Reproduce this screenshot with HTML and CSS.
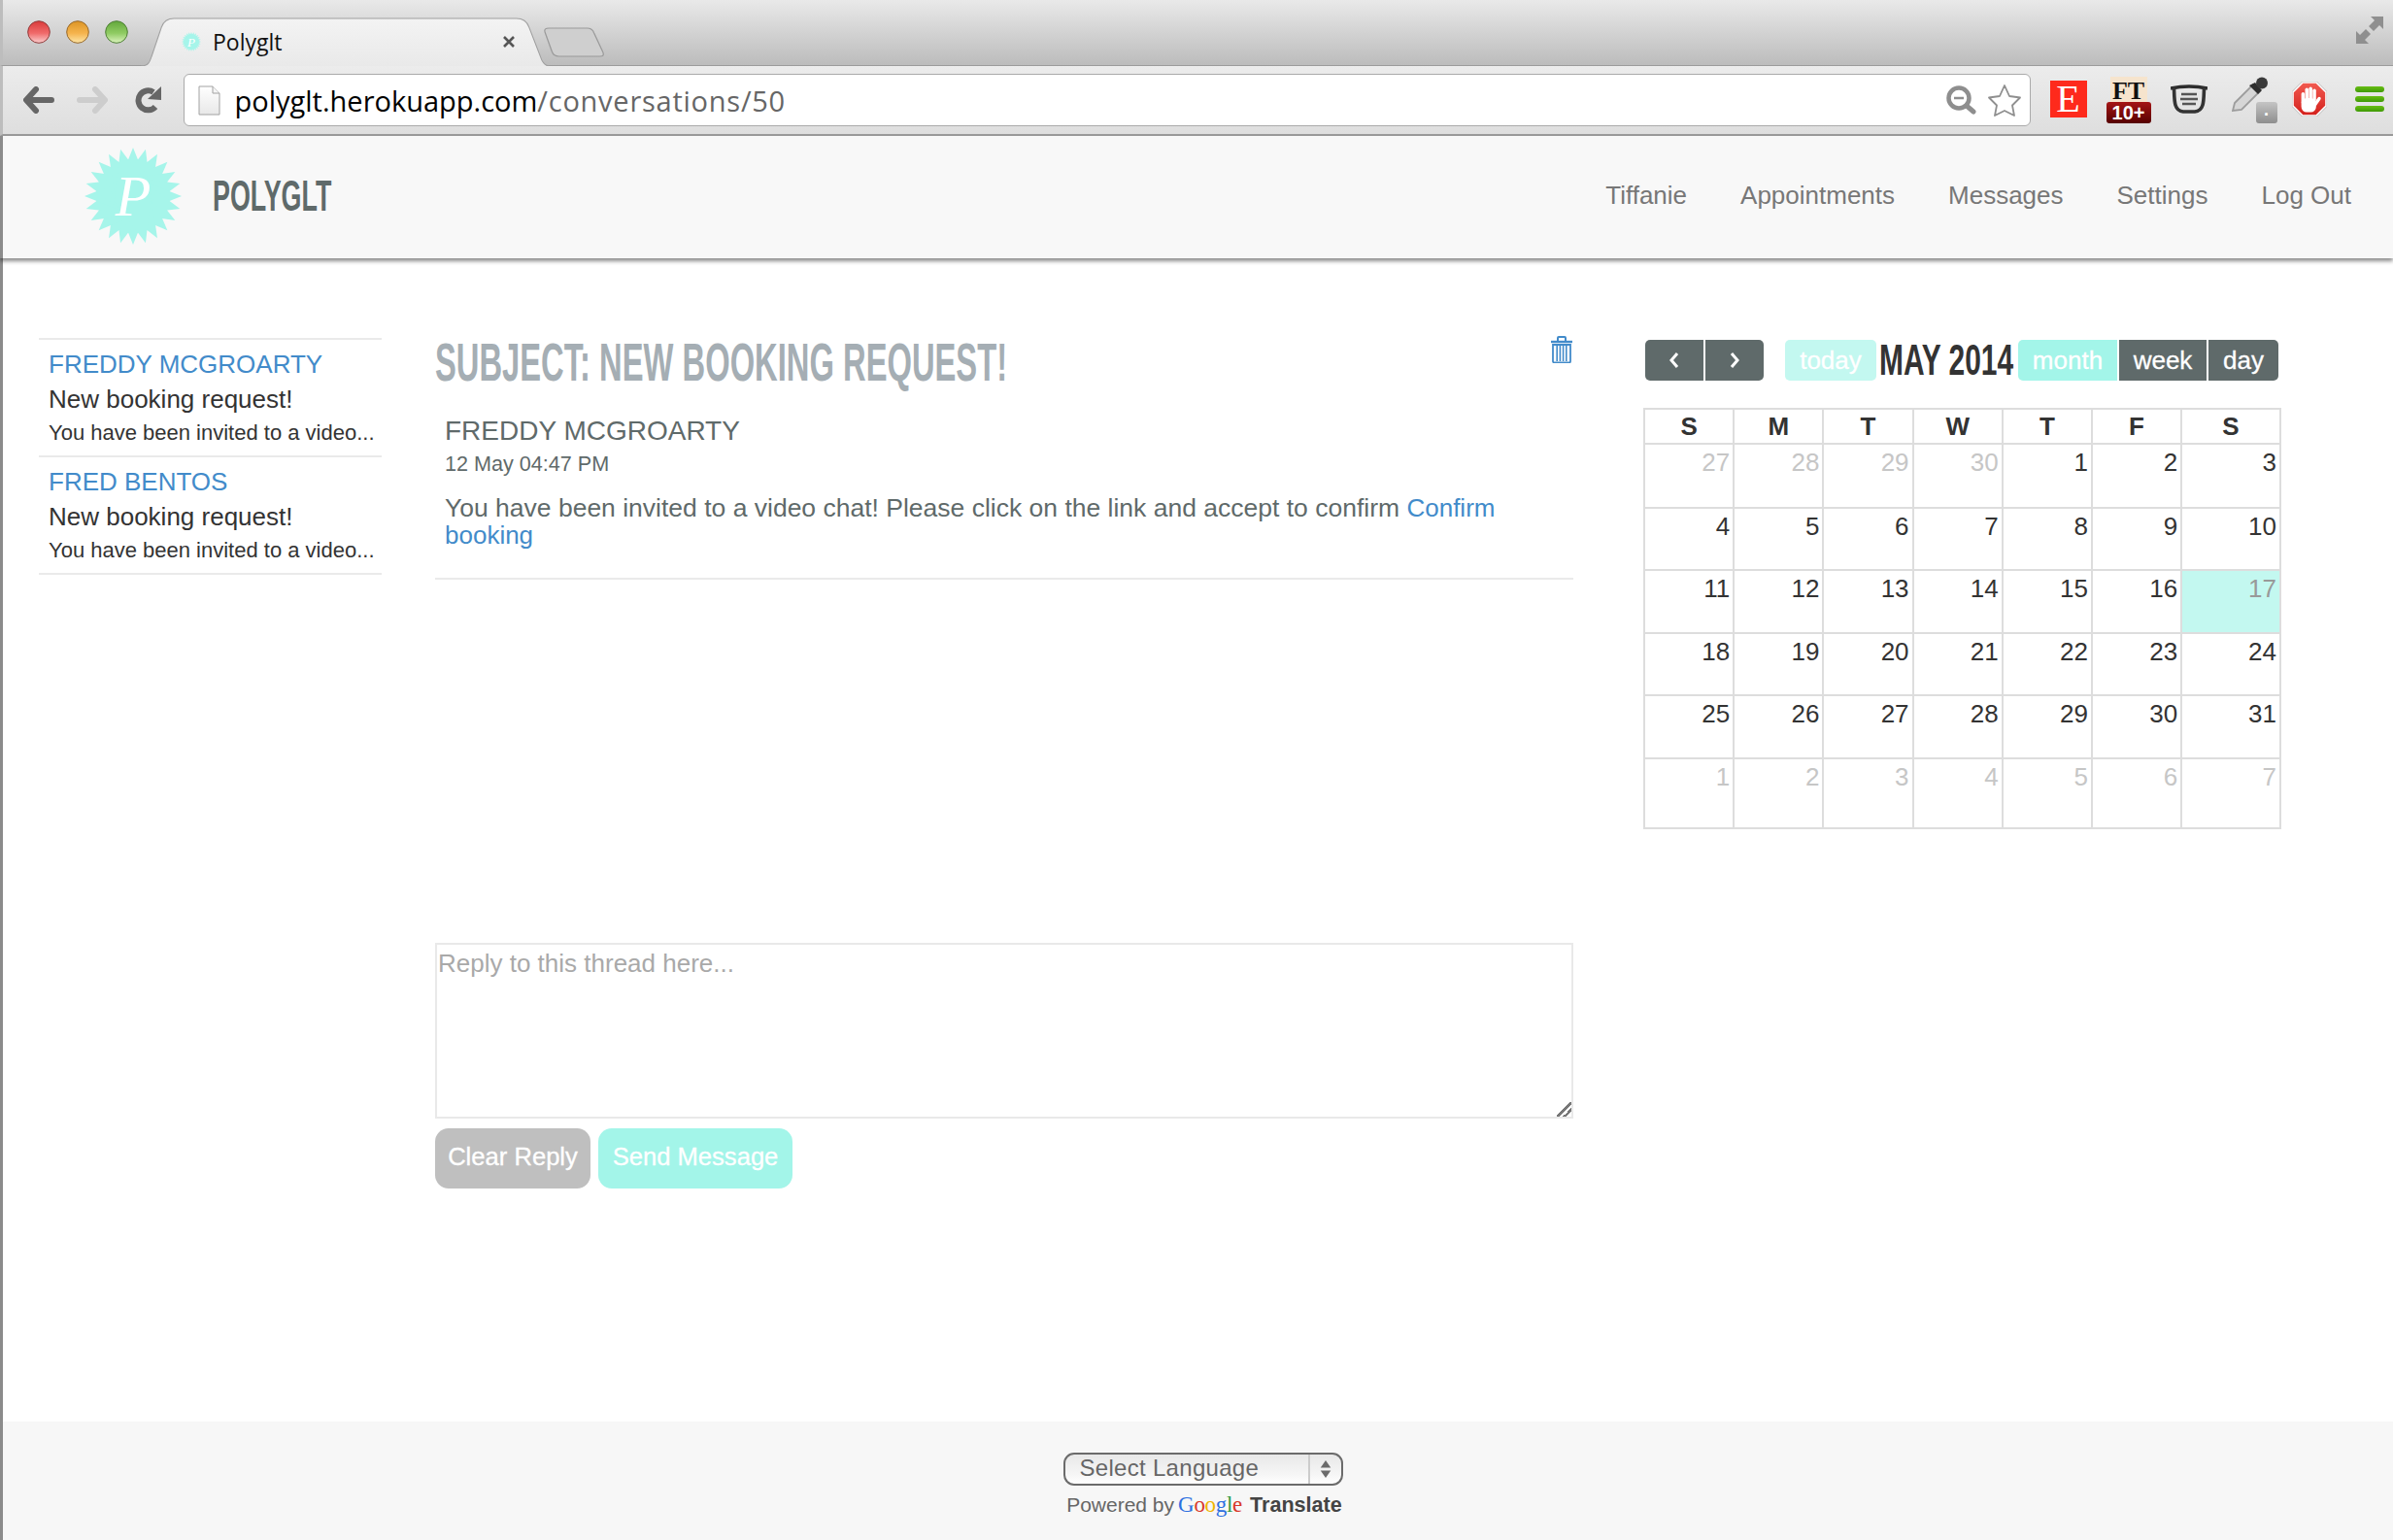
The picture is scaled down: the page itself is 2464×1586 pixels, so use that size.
FILE: index.html
```html
<!DOCTYPE html>
<html lang="en">
<head>
<meta charset="utf-8">
<title>Polyglt</title>
<link rel="stylesheet" href="styles.css">
</head>
<body>
<svg class="defs" width="0" height="0">
  <defs>
    <symbol id="burst" viewBox="-50 -50 100 100">
      <circle r="38"/>
      <g id="ray-set">
        <polygon id="ray" points="0,-50 20,0 0,50 -20,0"/>
        <use href="#ray" transform="rotate(15)"/>
        <use href="#ray" transform="rotate(30)"/>
        <use href="#ray" transform="rotate(45)"/>
      </g>
      <use href="#ray-set" transform="rotate(60)"/>
      <use href="#ray-set" transform="rotate(120)"/>
    </symbol>
    <linearGradient id="tabfill" x1="0" y1="0" x2="0" y2="1">
      <stop offset="0" stop-color="#f3f3f3"/><stop offset="1" stop-color="#e9e9e9"/>
    </linearGradient>
    <linearGradient id="redlight" x1="0" y1="0" x2="0" y2="1">
      <stop offset="0" stop-color="#d93a3a"/><stop offset=".55" stop-color="#f06a6a"/><stop offset="1" stop-color="#fbd0d0"/>
    </linearGradient>
    <linearGradient id="amberlight" x1="0" y1="0" x2="0" y2="1">
      <stop offset="0" stop-color="#dc9526"/><stop offset=".55" stop-color="#f5b34c"/><stop offset="1" stop-color="#fde6a8"/>
    </linearGradient>
    <linearGradient id="greenlight" x1="0" y1="0" x2="0" y2="1">
      <stop offset="0" stop-color="#63a83c"/><stop offset=".55" stop-color="#8fcb62"/><stop offset="1" stop-color="#dcf3bf"/>
    </linearGradient>
    <linearGradient id="docfill" x1="0" y1="0" x2="0" y2="1">
      <stop offset="0" stop-color="#ffffff"/><stop offset="1" stop-color="#e8e8e8"/>
    </linearGradient>
    <linearGradient id="adblock" x1="0" y1="0" x2="0" y2="1">
      <stop offset="0" stop-color="#f25a50"/><stop offset="1" stop-color="#d3201c"/>
    </linearGradient>
  </defs>
</svg>

<div class="browser">
  <div class="titlebar">
    <div class="lights">
      <svg class="light" viewBox="0 0 24 24"><circle cx="12" cy="12" r="11.3" fill="url(#redlight)" stroke="#8f3a3a"/></svg>
      <svg class="light" viewBox="0 0 24 24"><circle cx="12" cy="12" r="11.3" fill="url(#amberlight)" stroke="#97682a"/></svg>
      <svg class="light" viewBox="0 0 24 24"><circle cx="12" cy="12" r="11.3" fill="url(#greenlight)" stroke="#4d7f35"/></svg>
    </div>
    <div class="tab">
      <svg class="tab-shape" viewBox="0 0 416 51" preserveAspectRatio="none"><path d="M0 50 C8 50 9 46 11 40 L21 10 C23 4 27 1 34 1 H382 C389 1 393 4 395 10 L408 44 C410 48 412 50 416 50 V51 H0 Z" fill="url(#tabfill)" stroke="#a0a0a0"/></svg>
      <span class="tab-burst">
        <svg class="fav" viewBox="0 0 20 20"><use href="#burst" width="20" height="20" fill="#a6f5ea"/><text x="10" y="14.5" class="fav-p">P</text></svg>
      </span>
      <span class="tab-title">Polyglt</span>
      <svg class="tab-close" viewBox="0 0 14 14"><path d="M2 2 L12 12 M12 2 L2 12" stroke="#555" stroke-width="2.6" fill="none"/></svg>
    </div>
    <svg class="newtab" viewBox="0 0 62 31" preserveAspectRatio="none"><path d="M2 5 C1 2 3 1 6 1 H44 C48 1 50 3 51 6 L60 26 C61 29 60 30 57 30 H16 C12 30 10 28 9 25 Z" fill="#cfcfcf" stroke="#9a9a9a" stroke-width="1.2"/></svg>
    <svg class="expand" viewBox="0 0 28 28"><path d="M15 0 H28 V13 L24 9 L18 15 L13 10 L19 4 Z M0 28 V15 L4 19 L10 13 L15 18 L9 24 L13 28 Z" fill="#8f8f8f"/></svg>
  </div>

  <div class="toolbar">
    <svg class="nav-ico" viewBox="0 0 32 28"><path d="M13 3 L3 14 L13 25 M5 14 H29" fill="none" stroke="#666" stroke-width="6" stroke-linecap="round" stroke-linejoin="round"/></svg>
    <svg class="nav-ico fwd" viewBox="0 0 32 28"><path d="M19 3 L29 14 L19 25 M27 14 H3" fill="none" stroke="#cdcdcd" stroke-width="6" stroke-linecap="round" stroke-linejoin="round"/></svg>
    <svg class="reload" viewBox="0 0 28 28"><path d="M21 21 A10 10 0 1 1 19 6" fill="none" stroke="#666" stroke-width="6"/><polygon points="27,0 27,14 13,13" fill="#666"/></svg>
    <div class="omnibox">
      <svg class="doc" viewBox="0 0 23 31"><path d="M1 1 H15 L22 8 V30 H1 Z" fill="url(#docfill)" stroke="#a2a2a2"/><path d="M15 1 V8 H22" fill="#f5f5f5" stroke="#a2a2a2"/></svg>
      <span class="url"><span class="url-host">polyglt.herokuapp.com</span>/conversations/50</span>
      <svg class="magnifier" viewBox="0 0 31 30"><circle cx="13" cy="13" r="10.5" fill="none" stroke="#8e8e8e" stroke-width="4.5"/><path d="M8 13 H18" stroke="#8e8e8e" stroke-width="2.5"/><path d="M21 21 L28 27" stroke="#8e8e8e" stroke-width="5" stroke-linecap="round"/></svg>
      <svg class="star" viewBox="0 0 36 35"><path d="M18 2 L23 13 L34 14.5 L26 22.5 L28 33 L18 28 L8 33 L10 22.5 L2 14.5 L13 13 Z" fill="#fff" stroke="#8f8f8f" stroke-width="1.8" stroke-linejoin="round"/></svg>
    </div>
    <div class="ext-e">E</div>
    <div class="ext-ft"><span class="ft-word">FT</span><span class="ft-badge">10+</span></div>
    <svg class="ext-glasses" viewBox="0 0 38 30"><path d="M0 4 Q19 0 38 4" fill="none" stroke="#2c2c2c" stroke-width="3.6"/><path d="M3.5 3 C4 16 3 27 13 28 H25 C35 27 34 16 34.5 3" fill="none" stroke="#333" stroke-width="3.6"/><path d="M11 10 H27 M10 15 H28 M12 20 H26" stroke="#555" stroke-width="2.4"/></svg>
    <div class="ext-dropper">
      <svg class="dropper-ico" viewBox="0 0 38 37"><path d="M1 35 L3 27 L22 8 L29 15 L10 34 Z" fill="#d6d6d6" stroke="#9c9c9c" stroke-width="1.8"/><path d="M18 9 L27 18 L31 14 L24 6 Z" fill="#2e2e2e"/><circle cx="31" cy="6.5" r="6" fill="#3a3a3a"/></svg>
      <span class="dropper-badge">.</span>
    </div>
    <svg class="ext-stop" viewBox="0 0 36 36">
      <polygon points="11,1 25,1 35,11 35,25 25,35 11,35 1,25 1,11" fill="url(#adblock)" stroke="#fff" stroke-width="1.6"/>
      <polygon points="10.5,0 25.5,0 36,10.5 36,25.5 25.5,36 10.5,36 0,25.5 0,10.5" fill="none" stroke="#b5b5b5" stroke-width=".8"/>
      <g fill="#fff">
        <rect x="9.6" y="11" width="3.5" height="12" rx="1.75"/>
        <rect x="13.5" y="6.5" width="3.5" height="14" rx="1.75"/>
        <rect x="17.4" y="5.5" width="3.5" height="15" rx="1.75"/>
        <rect x="21.3" y="7.5" width="3.5" height="13" rx="1.75"/>
        <rect x="9.6" y="17" width="15.2" height="14.5" rx="5.5"/>
      </g>
      <path d="M23.5 24 L28 17.5" stroke="#fff" stroke-width="3.4" stroke-linecap="round"/>
    </svg>
    <div class="ext-menu"><span class="menu-bar"></span><span class="menu-bar"></span><span class="menu-bar"></span></div>
  </div>

  <header class="site-header">
    <a class="brand">
      <span class="brand-mark">
        <svg class="burst-svg" viewBox="0 0 100 100"><use href="#burst" width="100" height="100" fill="#a6f5ea"/><text x="50" y="70" class="logo-p">P</text></svg>
      </span>
      <span class="brand-box"><span class="brand-name">POLYGLT</span></span>
    </a>
    <nav class="site-nav">
      <a>Tiffanie</a><a>Appointments</a><a>Messages</a><a>Settings</a><a>Log Out</a>
    </nav>
  </header>

  <main class="content">
    <aside class="threads">
      <div class="thread">
        <a class="thread-name">FREDDY MCGROARTY</a>
        <div class="thread-subject">New booking request!</div>
        <div class="thread-text">You have been invited to a video...</div>
      </div>
      <div class="thread">
        <a class="thread-name">FRED BENTOS</a>
        <div class="thread-subject">New booking request!</div>
        <div class="thread-text">You have been invited to a video...</div>
      </div>
    </aside>

    <section class="conversation">
      <div class="subject-row">
        <h1 class="subject-box"><span class="subject">SUBJECT: NEW BOOKING REQUEST!</span></h1>
        <svg class="trash" viewBox="0 0 24 28"><path d="M1 6 H23" stroke="#428bca" stroke-width="2.4"/><path d="M8 5 V2 a1 1 0 0 1 1 -1 H15 a1 1 0 0 1 1 1 V5" fill="none" stroke="#428bca" stroke-width="2"/><path d="M3 9 H21 V26 a1.5 1.5 0 0 1 -1.5 1.5 H4.5 A1.5 1.5 0 0 1 3 26 Z" fill="none" stroke="#428bca" stroke-width="1.8"/><path d="M7.2 10 V26 M10.4 10 V26 M13.6 10 V26 M16.8 10 V26" stroke="#428bca" stroke-width="1.6"/></svg>
      </div>
      <article class="message">
        <div class="message-from">FREDDY MCGROARTY</div>
        <div class="message-date">12 May 04:47 PM</div>
        <p class="message-body">You have been invited to a video chat! Please click on the link and accept to confirm <a>Confirm booking</a></p>
      </article>
      <textarea class="reply" placeholder="Reply to this thread here..."></textarea>
      <div class="reply-actions">
        <button class="btn btn-clear">Clear Reply</button>
        <button class="btn btn-send">Send Message</button>
      </div>
    </section>

    <section class="calendar">
      <div class="cal-toolbar">
        <div class="cal-group">
          <button class="cal-btn cal-prev"><svg class="chev" viewBox="0 0 12 20"><path d="M9 3 L3 10 L9 17" fill="none" stroke="#fff" stroke-width="3"/></svg></button>
          <button class="cal-btn cal-next"><svg class="chev" viewBox="0 0 12 20"><path d="M3 3 L9 10 L3 17" fill="none" stroke="#fff" stroke-width="3"/></svg></button>
        </div>
        <button class="cal-btn cal-today">today</button>
        <h2 class="cal-title-box"><span class="cal-title">MAY 2014</span></h2>
        <div class="cal-group">
          <button class="cal-btn cal-month">month</button>
          <button class="cal-btn cal-week">week</button>
          <button class="cal-btn cal-day">day</button>
        </div>
      </div>
      <table class="cal-table">
        <colgroup><col class="c"><col class="c"><col class="c"><col class="c"><col class="c"><col class="c"><col class="c-last"></colgroup>
        <thead><tr class="r-head"><th>S</th><th>M</th><th>T</th><th>W</th><th>T</th><th>F</th><th>S</th></tr></thead>
        <tbody>
          <tr class="r-first"><td class="off">27</td><td class="off">28</td><td class="off">29</td><td class="off">30</td><td>1</td><td>2</td><td>3</td></tr>
          <tr class="r"><td>4</td><td>5</td><td>6</td><td>7</td><td>8</td><td>9</td><td>10</td></tr>
          <tr class="r"><td>11</td><td>12</td><td>13</td><td>14</td><td>15</td><td>16</td><td class="now">17</td></tr>
          <tr class="r"><td>18</td><td>19</td><td>20</td><td>21</td><td>22</td><td>23</td><td>24</td></tr>
          <tr class="r"><td>25</td><td>26</td><td>27</td><td>28</td><td>29</td><td>30</td><td>31</td></tr>
          <tr class="r-last"><td class="off">1</td><td class="off">2</td><td class="off">3</td><td class="off">4</td><td class="off">5</td><td class="off">6</td><td class="off">7</td></tr>
        </tbody>
      </table>
    </section>
  </main>

  <footer class="site-footer">
    <div class="lang-select">
      <span class="lang-label">Select Language</span>
      <span class="lang-arrows"><svg class="lang-svg" viewBox="0 0 16 26"><path d="M8 1 L15 11 H1 Z M1 15 H15 L8 25 Z" fill="#6b6b6b"/></svg></span>
    </div>
    <div class="powered">
      <span>Powered by</span>
      <span class="google"><span class="g-b">G</span><span class="g-r">o</span><span class="g-y">o</span><span class="g-b">g</span><span class="g-g">l</span><span class="g-r">e</span></span>
      <strong class="translate">Translate</strong>
    </div>
  </footer>
</div>
</body>
</html>
```
FILE: styles.css
```css
* { box-sizing: border-box; }
html, body { margin: 0; padding: 0; background: #fff; }
body { font-family: "Liberation Sans", Arial, sans-serif; }
.defs { position: absolute; }
a { color: inherit; text-decoration: none; }

.browser { min-height: 100vh; display: flex; flex-direction: column; }

/* Title bar */
.titlebar {
  height: 68px; display: flex; align-items: flex-start;
  background: linear-gradient(#e9e9e9, #bcbcbc);
  border-bottom: 1px solid #9b9b9b;
  border-left: 3px solid #bdbdbd;
}
.lights { display: flex; gap: 16px; margin: 21px 0 0 25px; }
.light { width: 24px; height: 24px; display: block; }
.tab {
  position: relative; width: 421px; height: 50px; margin: 18px 0 0 13px;
  display: flex; align-items: center; padding: 0 35px 0 42px;
}
.tab-shape { position: absolute; inset: 0; width: 421px; height: 51px; }
.tab-burst, .tab-title, .tab-close { position: relative; }
.tab-burst { width: 20px; height: 20px; display: block; }
.fav { width: 20px; height: 20px; display: block; }
.fav-p { font: italic 13px "Liberation Serif", serif; fill: #fff; text-anchor: middle; }
.tab-title { margin-left: 12px; font: 23px "Open Sans", sans-serif; color: #111; flex: 1; }
.tab-close { width: 14px; height: 14px; }
.newtab { width: 64px; height: 31px; margin: 28px 0 0 -7px; }
.expand { width: 28px; height: 28px; margin: 17px 10px 0 auto; }

/* Toolbar */
.toolbar {
  height: 72px; display: flex; align-items: center;
  background: linear-gradient(#ececec, #dedede);
  border-bottom: 2px solid #9b9b9b;
  border-left: 3px solid #bdbdbd;
  position: relative;
}
.nav-ico { width: 32px; height: 28px; margin-left: 21px; }
.nav-ico.fwd { margin-left: 23px; }
.reload { width: 28px; height: 28px; margin-left: 28px; }
.omnibox {
  width: 1902px; height: 54px; margin-left: 21.5px;
  display: flex; align-items: center;
  background: #fff; border: 1.5px solid #aaa; border-radius: 6px;
}
.doc { width: 23px; height: 31px; margin-left: 14px; }
.url { margin-left: 15px; font: 29px "Open Sans", sans-serif; color: #666; flex: 1; white-space: nowrap; letter-spacing: .75px; }
.url-host { color: #000; letter-spacing: 0; }
.magnifier { width: 31px; height: 30px; margin-right: 11px; }
.star { width: 36px; height: 35px; margin-right: 8px; }
.ext-e {
  width: 38px; height: 38px; margin: -2px 0 0 20px;
  background: #fe2a1c; color: #fff; text-align: center;
  font: 40px/38px "Liberation Serif", serif;
}
.ext-ft { position: relative; width: 46px; height: 48px; margin: 0 0 0 20px; }
.ft-word {
  position: absolute; left: 4px; top: 0; width: 38px; height: 28px;
  background: #f6e4cd; color: #111; text-align: center;
  font: bold 26px/30px "Liberation Serif", serif;
}
.ft-badge {
  position: absolute; left: 0; top: 26px; width: 46px; height: 22px;
  background: linear-gradient(#a51616, #560000); color: #fff; border-radius: 3px;
  text-align: center; font: bold 20px/22px "Liberation Sans", sans-serif;
}
.ext-glasses { width: 38px; height: 30px; margin: -2px 0 0 20px; }
.ext-dropper { position: relative; width: 47px; height: 48px; margin-left: 25px; }
.dropper-ico { width: 38px; height: 37px; display: block; }
.dropper-badge {
  position: absolute; left: 25px; top: 26px; width: 22px; height: 22px;
  background: linear-gradient(#c4c4c4, #8e8e8e); color: #fff; border-radius: 3px;
  text-align: center; font: bold 18px/16px "Liberation Sans", sans-serif;
}
.ext-stop { width: 36px; height: 36px; margin: -2px 0 0 15px; }
.ext-menu { width: 30px; margin-left: 29px; display: flex; flex-direction: column; gap: 4px; margin-top: -2px; }
.menu-bar { height: 6px; border-radius: 3px; background: linear-gradient(#68be14, #3f9a06); display: block; }

/* Header */
.site-header {
  height: 126px; display: flex; align-items: center; justify-content: space-between;
  background: #f8f8f8; padding: 0 43px 3px 84px;
  border-left: 3px solid #8b8b8b;
  box-shadow: 0 3px 4px rgba(0, 0, 0, .45);
  position: relative;
}
.brand { display: flex; align-items: center; }
.brand-mark { width: 100px; height: 100px; display: block; }
.burst-svg { width: 100px; height: 100px; display: block; }
.logo-p { font: italic 60px "Liberation Serif", serif; fill: #fff; text-anchor: middle; }
.brand-box { display: block; width: 122px; margin-left: 32px; height: 46px; }
.brand-name {
  display: inline-block; transform: scaleX(.61); transform-origin: left center;
  font-size: 44px; line-height: 46px; font-weight: bold; color: #5f6a6a; white-space: nowrap;
}
.site-nav { display: flex; gap: 55px; font-size: 26px; color: #777; }

/* Main */
.content {
  flex: 1; display: grid; grid-template-columns: 354px 1172px 656px;
  column-gap: 55px; padding: 82px 0 0 36px; align-items: start;
  border-left: 3px solid #8b8b8b;
}
.threads { border-bottom: 2px solid #eaeaea; margin-left: 1px; }
.thread { border-top: 2px solid #eaeaea; padding: 10px 10px 9px; }
.thread-name { display: block; font-size: 26px; line-height: 30px; color: #428bca; white-space: nowrap; }
.thread-subject { margin-top: 6px; font-size: 26px; line-height: 30px; color: #333; }
.thread-text { margin-top: 6px; font-size: 22px; line-height: 28px; color: #333; white-space: nowrap; }

.subject-row { display: flex; justify-content: space-between; align-items: flex-start; }
.subject-box { margin: 3px 0 0; height: 44px; width: 586px; font-weight: normal; }
.subject {
  display: inline-block; transform: scaleX(.595); transform-origin: left center;
  font-size: 55px; line-height: 44px; font-weight: bold; color: #a5aeb4; white-space: nowrap;
}
.trash { width: 24px; height: 28px; margin-top: -2px; }
.message { padding: 33px 10px 30px; border-bottom: 2px solid #eaeaea; color: #5f6a6a; }
.message-from { font-size: 28px; line-height: 32px; }
.message-date { margin-top: 5px; font-size: 21.6px; line-height: 26px; }
.message-body { margin: 18px 0 0; font-size: 26.5px; line-height: 28px; }
.message-body a { color: #428bca; font-size: 26px; }
.reply {
  display: block; width: 100%; height: 181px; margin-top: 374px; padding: 4px 1px;
  border: 2px solid #e9e9e9; background: #fff; color: #333; outline: none;
  font: 26px/1.2 "Liberation Sans", sans-serif;
}
.reply::placeholder { color: #a9a9a9; opacity: 1; }
.reply::-webkit-resizer {
  background: linear-gradient(135deg, transparent 0 46%, #777 46% 58%, transparent 58% 70%, #777 70% 82%, transparent 82%);
}
.reply-actions { display: flex; gap: 8px; margin-top: 10px; }
.btn {
  height: 62px; border: 0; border-radius: 14px; color: #fff;
  font: 25.6px "Liberation Sans", sans-serif; padding: 0 0 3px;
  -webkit-text-stroke: .3px #fff;
}
.btn-clear { width: 160px; background: #bfbfbf; }
.btn-send { width: 200px; background: #a3f5e9; }

/* Calendar */
.calendar { margin-top: 2px; width: 656px; margin-left: 17px; }
.cal-toolbar { display: flex; align-items: stretch; height: 42px; margin-left: 2px; }
.cal-group { display: flex; gap: 2px; }
.cal-btn {
  height: 42px; border: 0; padding: 0; color: #fff; background: #5f6a6a;
  font: 26px "Liberation Sans", sans-serif; display: flex; align-items: center; justify-content: center;
  -webkit-text-stroke: .3px #fff;
}
.cal-prev { width: 60px; border-radius: 5px 0 0 5px; }
.cal-next { width: 60px; border-radius: 0 5px 5px 0; }
.chev { width: 12px; height: 20px; }
.cal-today { width: 94px; margin-left: 22px; background: #c3f8f0; border-radius: 5px; }
.cal-title-box { width: 146px; margin: 0; padding-left: 3px; font-weight: normal; height: 42px; }
.cal-title {
  display: inline-block; transform: scaleX(.665); transform-origin: left center;
  font-size: 45px; line-height: 42px; font-weight: bold; color: #333; white-space: nowrap;
}
.cal-month { width: 102px; background: #a3f5e9; border-radius: 5px 0 0 5px; }
.cal-week { width: 90px; }
.cal-day { width: 72px; border-radius: 0 5px 5px 0; }

.cal-table {
  margin-top: 28px; width: 655px; table-layout: fixed; border-collapse: collapse;
  font-size: 26px; color: #333;
}
.c { width: 92.2px; }
.c-last { width: 101.8px; }
.cal-table th, .cal-table td { border: 2px solid #ddd; padding: 0; vertical-align: top; }
.cal-table th { font-weight: bold; text-align: center; line-height: 34px; padding-top: 0; }
.cal-table td { text-align: right; padding: 3px 3px 0 0; line-height: 30px; }
.r-head { height: 36px; }
.r-first { height: 66px; }
.r { height: 64.4px; }
.r-last { height: 72px; }
.cal-table .off { color: #c6c6c6; }
.cal-table .now { background: #c3f8f0; color: #999; }

/* Footer */
.site-footer {
  height: 122px; flex: none; background: #f7f7f7;
  display: flex; flex-direction: column; align-items: center; padding: 32px 0 0 4px;
  border-left: 3px solid #8b8b8b;
}
.lang-select {
  width: 288px; height: 34px; display: flex; align-items: center; margin-left: 6px;
  border: 2px solid #6b6b6b; border-radius: 11px; color: #666;
  background: linear-gradient(#e8e8e8, #f6f6f6 70%, #fff);
}
.lang-label { flex: 1; padding-left: 15px; font-size: 24px; letter-spacing: .3px; line-height: 26px; padding-bottom: 2px; }
.lang-arrows { width: 34px; height: 30px; border-left: 2px solid #ccc; display: flex; align-items: center; justify-content: center; }
.lang-svg { width: 12px; height: 22px; }
.powered { display: flex; align-items: baseline; margin-top: 7px; font-size: 21px; color: #666; height: 30px; margin-left: 9px; }
.google { font: 23px "Liberation Serif", serif; margin-left: 4px; letter-spacing: -.3px; }
.g-b { color: #2d6fe0; }
.g-r { color: #d8392b; }
.g-y { color: #f0b400; }
.g-g { color: #2e9e48; }
.translate { margin-left: 8px; color: #444; font-size: 21.6px; }
```
